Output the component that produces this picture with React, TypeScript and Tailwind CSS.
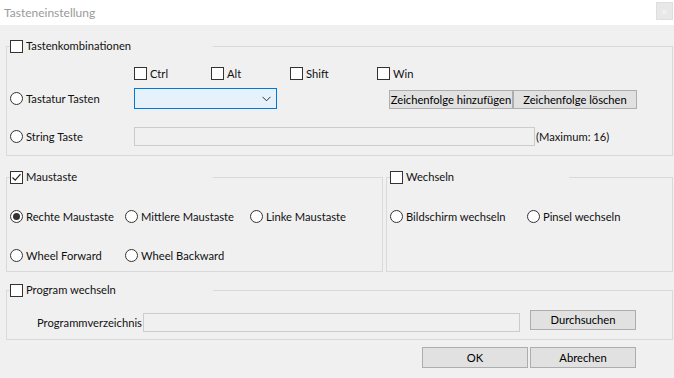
import React from "react";

const Check = ({ checked }: { checked?: boolean }) => (
  <span className="w-[13px] h-[13px] border border-[#333333] bg-white flex items-center justify-center shrink-0">
    {checked && (
      <svg width="11" height="11" viewBox="0 0 11 11">
        <path d="M1.5 5.5 L4.2 8.2 L9.5 2.2" stroke="#222" strokeWidth="1.2" fill="none" />
      </svg>
    )}
  </span>
);

const Radio = ({ checked }: { checked?: boolean }) => (
  <span className="w-[13px] h-[13px] rounded-full border border-[#333333] bg-white flex items-center justify-center shrink-0">
    {checked && <span className="w-[7px] h-[7px] rounded-full bg-[#333333]" />}
  </span>
);

const CheckItem = ({ label, checked, className }: { label: string; checked?: boolean; className?: string }) => (
  <div className={"flex items-center gap-[3px] h-[13px] shrink-0 whitespace-nowrap " + (className ?? "")}>
    <Check checked={checked} />
    <span className="leading-none">{label}</span>
  </div>
);

const RadioItem = ({ label, checked, className }: { label: string; checked?: boolean; className?: string }) => (
  <div className={"flex items-center gap-[3px] h-[13px] shrink-0 whitespace-nowrap " + (className ?? "")}>
    <Radio checked={checked} />
    <span className="leading-none">{label}</span>
  </div>
);

const Btn = ({ label, className }: { label: string; className?: string }) => (
  <button className={"bg-[#e1e1e1] border border-[#adadad] flex items-center justify-center leading-none text-black whitespace-nowrap shrink-0 " + (className ?? "")}>
    {label}
  </button>
);

const Legend = ({ label, checked, width }: { label: string; checked?: boolean; width: string }) => (
  <legend className={"ml-[3px] h-[14px] flex items-center " + width}>
    <CheckItem label={label} checked={checked} />
  </legend>
);

export default function App() {
  return (
    <div className="w-[674px] h-[378px] bg-[#f0f0f0] text-[11.2px] text-[#111111] font-['Segoe_UI','Lato',sans-serif] overflow-hidden">
      {/* title bar */}
      <div className="h-[25px] bg-white flex items-center justify-between pl-[4px]">
        <span className="text-[#9a9a9a] text-[12px] leading-none">Tasteneinstellung</span>
        <div className="w-[17px] h-[18px] mr-[1px] mt-[-4px] bg-[#e8e8e8] border border-[#dedede] flex items-center justify-center text-[#f8f8f8] text-[10px] leading-none">
          ×
        </div>
      </div>

      <div className="pl-[6px] pr-[1px] pt-[14px]">
        {/* Tastenkombinationen */}
        <fieldset className="border border-[#d9d9d9] p-0 pb-[9px] m-0">
          <Legend label="Tastenkombinationen" width="w-[203px]" />
          <div className="flex mt-[14px] pl-[127px]">
            <CheckItem label="Ctrl" className="w-[77px]" />
            <CheckItem label="Alt" className="w-[79px]" />
            <CheckItem label="Shift" className="w-[87px]" />
            <CheckItem label="Win" />
          </div>
          <div className="flex mt-[8px] h-[21px]">
            <div className="w-[127px] flex items-center pl-[3px]">
              <RadioItem label="Tastatur Tasten" />
            </div>
            <div className="w-[143px] h-[21px] bg-[#e5f1fb] border border-[#0078d7] flex items-center justify-end pr-[5px]">
              <svg width="9" height="6" viewBox="0 0 9 6">
                <path d="M0.5 0.8 L4.5 4.8 L8.5 0.8" stroke="#333" strokeWidth="1" fill="none" />
              </svg>
            </div>
            <Btn label="Zeichenfolge hinzufügen" className="w-[124px] h-[19px] self-end ml-[112px]" />
            <Btn label="Zeichenfolge löschen" className="w-[124px] h-[19px] self-end" />
          </div>
          <div className="flex mt-[18px] h-[19px] items-center">
            <div className="w-[127px] flex items-center pl-[3px]">
              <RadioItem label="String Taste" />
            </div>
            <div className="w-[401px] h-[19px] bg-[#f0f0f0] border border-[#cccccc]" />
            <span className="ml-[1px] leading-none whitespace-nowrap">(Maximum: 16)</span>
          </div>
        </fieldset>

        {/* Maustaste + Wechseln */}
        <div className="flex gap-[3px] mt-[14px]">
          <fieldset className="w-[377px] border border-[#d9d9d9] p-0 pb-[9px] m-0">
            <Legend label="Maustaste" checked width="w-[203px]" />
            <div className="flex mt-[26px] pl-[3px]">
              <RadioItem label="Rechte Maustaste" checked className="w-[115px]" />
              <RadioItem label="Mittlere Maustaste" className="w-[125px]" />
              <RadioItem label="Linke Maustaste" />
            </div>
            <div className="flex mt-[26px] pl-[3px]">
              <RadioItem label="Wheel Forward" className="w-[115px]" />
              <RadioItem label="Wheel Backward" />
            </div>
          </fieldset>
          <fieldset className="flex-1 border border-[#d9d9d9] p-0 pb-[9px] m-0">
            <Legend label="Wechseln" width="w-[179px]" />
            <div className="flex mt-[26px] pl-[3px]">
              <RadioItem label="Bildschirm wechseln" className="w-[137px]" />
              <RadioItem label="Pinsel wechseln" />
            </div>
          </fieldset>
        </div>

        {/* Program wechseln */}
        <fieldset className="border border-[#d9d9d9] p-0 pb-[7px] m-0 mt-[11px]">
          <Legend label="Program wechseln" width="w-[203px]" />
          <div className="flex items-start mt-[13px] pl-[30px]">
            <div className="flex items-center mt-[3px]">
              <span className="w-[106px] leading-none whitespace-nowrap">Programmverzeichnis</span>
              <div className="w-[377px] h-[19px] bg-[#f0f0f0] border border-[#cccccc]" />
            </div>
            <Btn label="Durchsuchen" className="w-[106px] h-[20px] ml-[10px]" />
          </div>
        </fieldset>

        <div className="flex justify-end gap-[2px] mt-[7px] pr-[37px]">
          <Btn label="OK" className="w-[106px] h-[21px]" />
          <Btn label="Abrechen" className="w-[106px] h-[21px]" />
        </div>
      </div>
    </div>
  );
}
